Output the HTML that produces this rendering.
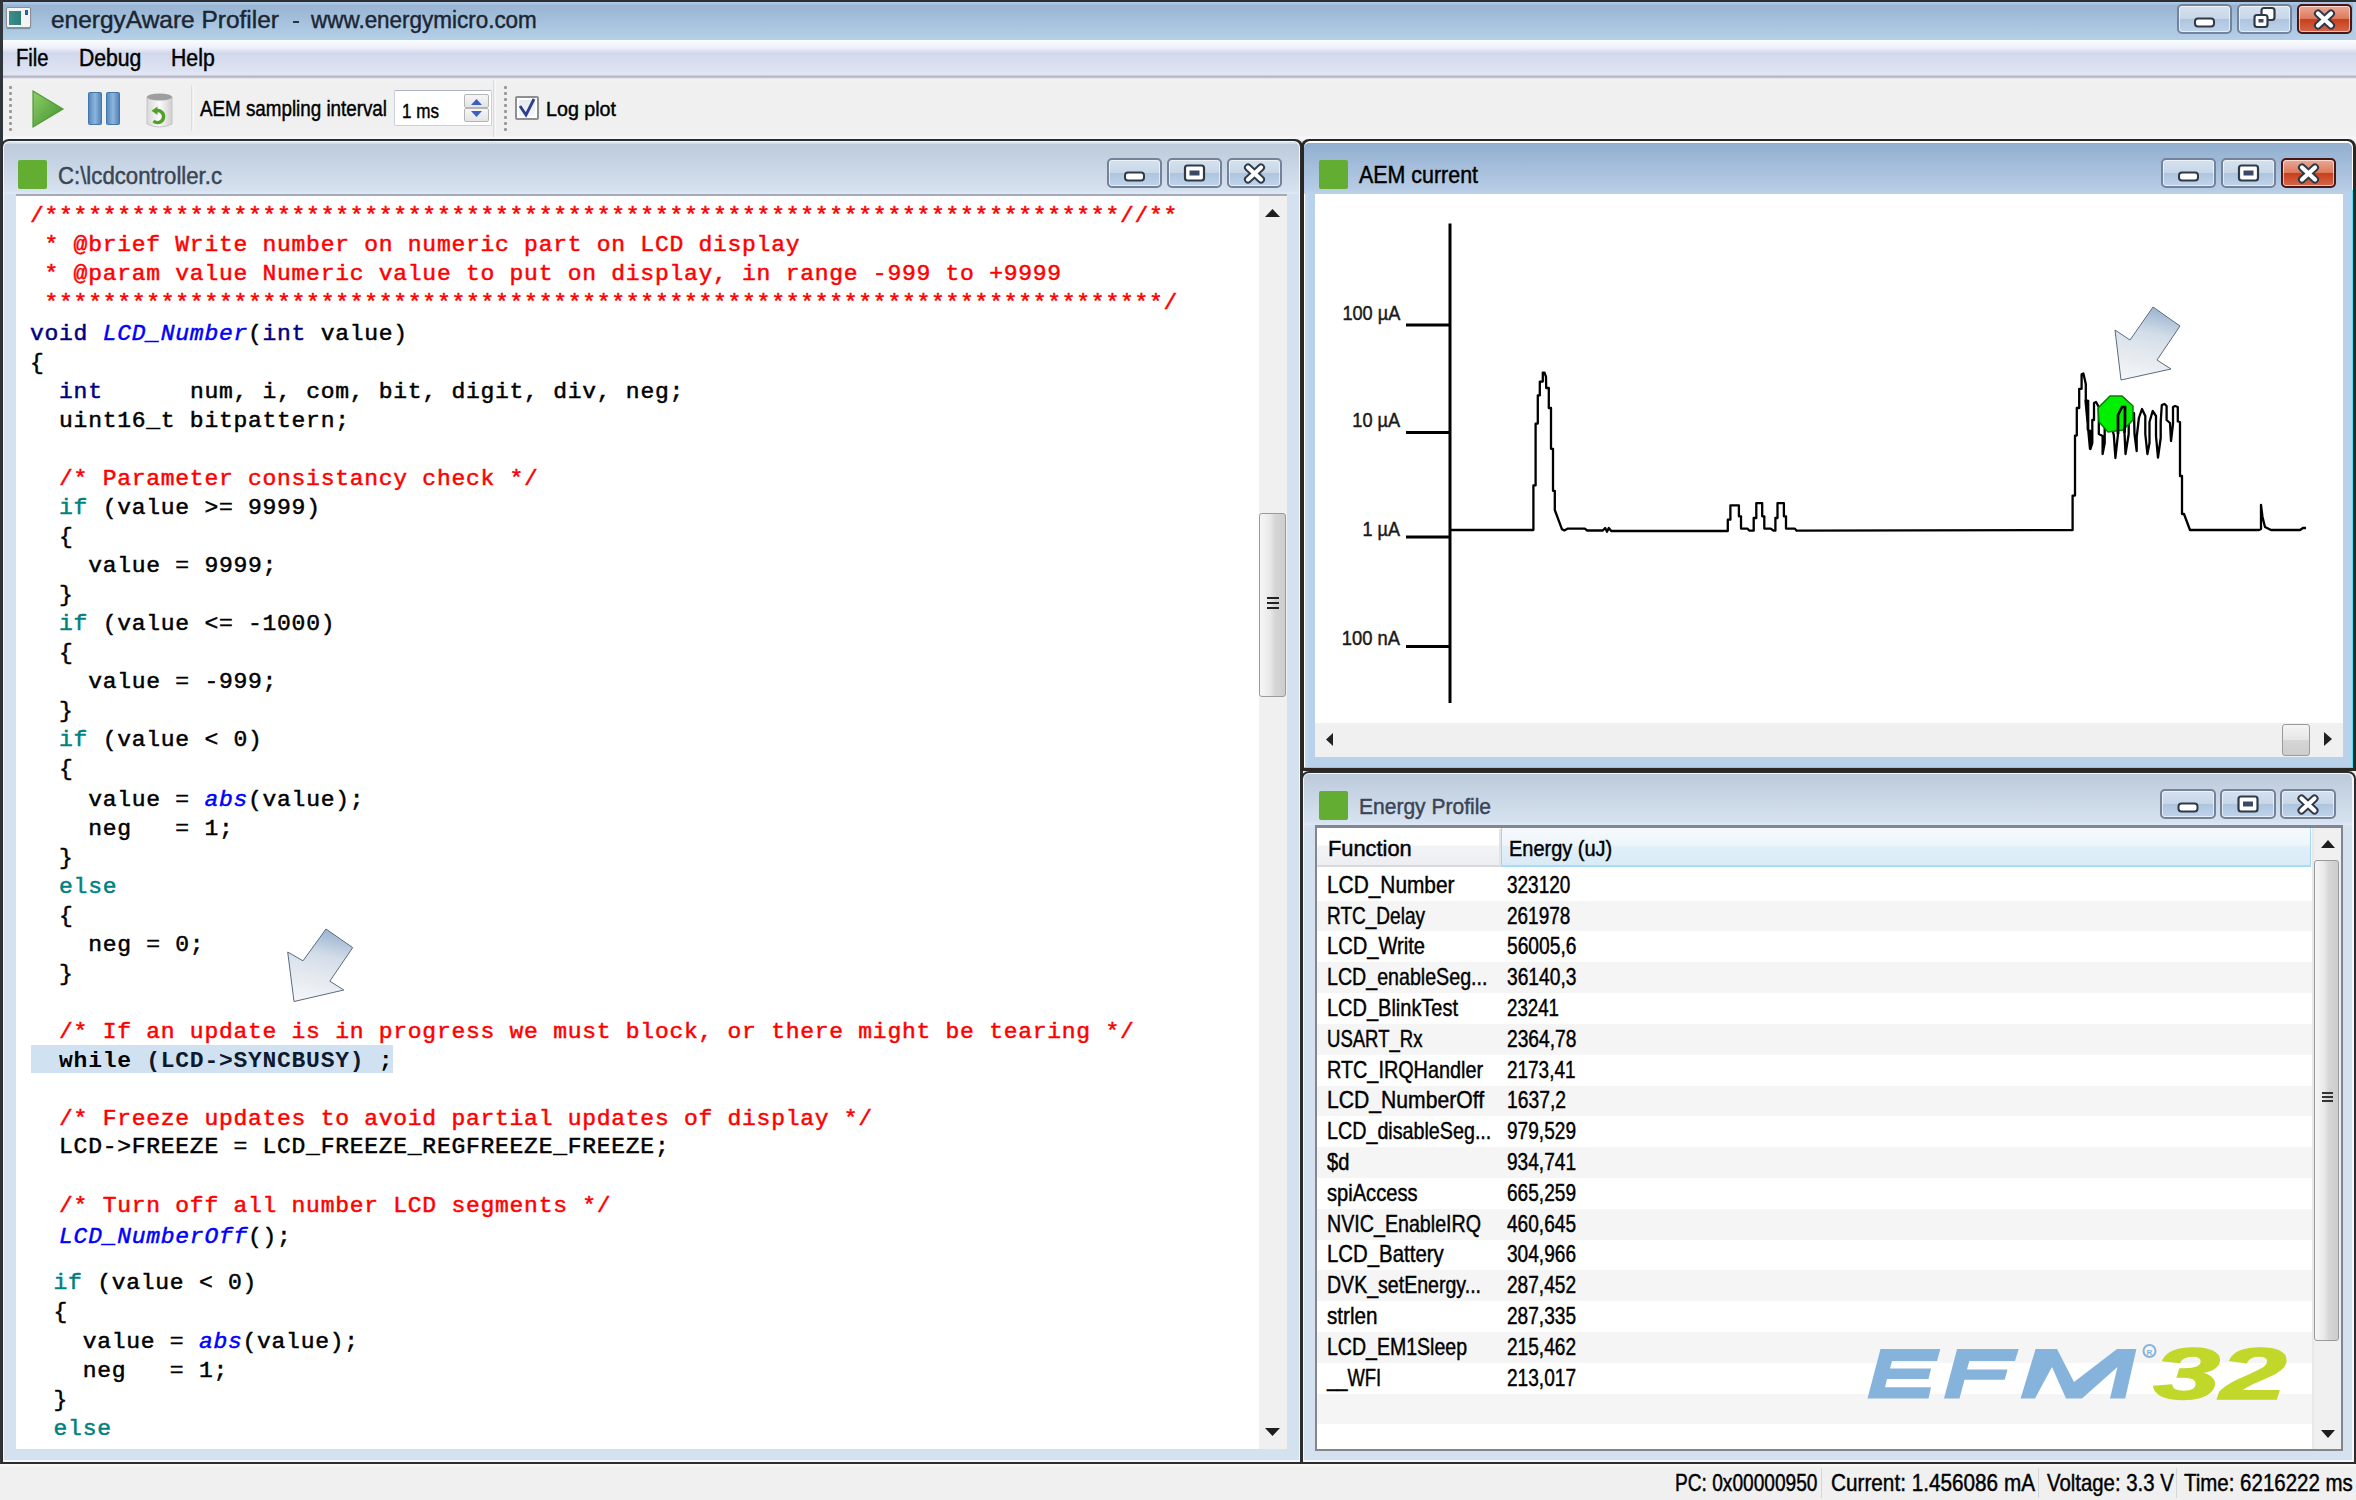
<!DOCTYPE html>
<html><head><meta charset="utf-8">
<style>
*{margin:0;padding:0;box-sizing:border-box}
html,body{width:2356px;height:1500px;overflow:hidden;background:#f0f0f0;font-family:"Liberation Sans",sans-serif;position:relative}
.a{position:absolute}
.t{position:absolute;white-space:pre;line-height:1}
.btn{position:absolute;border:2px solid #75839a;border-radius:5px;box-shadow:inset 0 0 0 1px rgba(255,255,255,.6);background:linear-gradient(#d5e1ee,#c8d7e8 48%,#aec5df 52%,#c0d3ea)}
.btnr{background:linear-gradient(#eba894,#dd7b5e 48%,#c8401c 52%,#d5664a);border-color:#4a1717}
.code{font-family:"Liberation Mono",monospace;font-size:23px;letter-spacing:0.73px;color:#000;-webkit-text-stroke:0.5px;transform:scaleY(0.92)}
.cm{color:#ff0000}.kw{color:#008080}.ty{color:#000080}.fn{color:#0000ff;font-style:italic}
svg{position:absolute;overflow:visible}
</style></head>
<body>

<div class="a" style="left:0px;top:0px;width:2356px;height:40px;background:linear-gradient(#2e2e2e 0,#2e2e2e 2px,#a8c6e6 2px,#a8c6e6 4px,#98b4d2 5px,#b4cfe7 39px,#b4cfe7 40px)"></div>
<div class="a" style="left:0px;top:40px;width:2356px;height:39px;background:linear-gradient(#fafdfd 0,#eef0f8 8px,#d2d8ec 13px,#e0e5f3 34px,#e6e6f8 35px,#b4b6c6 36px,#b4b6c6 37px,#f3f3f3 39px)"></div>
<div class="a" style="left:0px;top:79px;width:2356px;height:60px;background:linear-gradient(#f3f3f3,#f0f0f0 4px,#f0f0f0 56px,#f4f6fa 58px,#f4f6fa 60px)"></div>
<div class="a" style="left:0px;top:0px;width:3px;height:1464px;background:#30353c"></div>
<div class="a" style="left:2353px;top:2px;width:3px;height:38px;background:#b6cde6"></div>
<div class="a" style="left:6px;top:7px;width:25px;height:21px;background:#f4f4f4;border:1px solid #8a8f96;border-radius:2px;box-shadow:0 1px 1px rgba(0,0,0,.3)"></div>
<div class="a" style="left:9px;top:11px;width:12px;height:14px;background:linear-gradient(90deg,#3d8f8a,#2e7f7b)"></div>
<div class="a" style="left:25px;top:10px;width:3px;height:5px;background:#2c5fb0"></div>
<div class="t" style="top:7.7px;font-size:24.6px;color:#1b2633;font-family:'Liberation Sans',sans-serif;-webkit-text-stroke:0.45px #1b2633;left:50.5px;transform:scaleX(0.9943);transform-origin:left top;">energyAware Profiler</div>
<div class="a" style="left:293px;top:21px;width:6px;height:2px;background:#2a3440"></div>
<div class="t" style="top:7.7px;font-size:24.6px;color:#1b2633;font-family:'Liberation Sans',sans-serif;-webkit-text-stroke:0.45px #1b2633;left:310.5px;transform:scaleX(0.9128);transform-origin:left top;">www.energymicro.com</div>
<div class="btn" style="left:2177px;top:4px;width:55px;height:30px"></div>
<div class="btn" style="left:2237px;top:4px;width:55px;height:30px"></div>
<div class="btn btnr" style="left:2297px;top:4px;width:55px;height:30px"></div>
<svg style="left:0;top:0" width="2356" height="1500" viewBox="0 0 2356 1500"><rect x="2195.0" y="18.5" width="19" height="8" rx="3" fill="#fff" stroke="#2f3a48" stroke-width="2"/><rect x="2261.5" y="8.0" width="13" height="12" rx="2.5" fill="#fff" stroke="#2f3a48" stroke-width="2.2"/><rect x="2254.5" y="15.0" width="13" height="12" rx="2.5" fill="#fff" stroke="#2f3a48" stroke-width="2.2"/><rect x="2258.5" y="19.0" width="5" height="3.5" fill="#3a4a66"/><path d="M2318.0 13.5 L2331.0 25.5 M2331.0 13.5 L2318.0 25.5" stroke="#2f3a48" stroke-width="8" stroke-linecap="round"/><path d="M2318.0 13.5 L2331.0 25.5 M2331.0 13.5 L2318.0 25.5" stroke="#fff" stroke-width="4.2" stroke-linecap="round"/></svg>
<div class="t" style="top:46.8px;font-size:23.3px;color:#000;font-family:'Liberation Sans',sans-serif;-webkit-text-stroke:0.45px #000;left:16.3px;transform:scaleX(0.8658);transform-origin:left top;">File</div>
<div class="t" style="top:46.8px;font-size:23.3px;color:#000;font-family:'Liberation Sans',sans-serif;-webkit-text-stroke:0.45px #000;left:78.7px;transform:scaleX(0.9089);transform-origin:left top;">Debug</div>
<div class="t" style="top:46.8px;font-size:23.3px;color:#000;font-family:'Liberation Sans',sans-serif;-webkit-text-stroke:0.45px #000;left:170.8px;transform:scaleX(0.9121);transform-origin:left top;">Help</div>
<div class="a" style="left:9px;top:86px;width:3px;height:3px;background:#9a9a9a;border-radius:1px"></div>
<div class="a" style="left:9px;top:92px;width:3px;height:3px;background:#9a9a9a;border-radius:1px"></div>
<div class="a" style="left:9px;top:98px;width:3px;height:3px;background:#9a9a9a;border-radius:1px"></div>
<div class="a" style="left:9px;top:104px;width:3px;height:3px;background:#9a9a9a;border-radius:1px"></div>
<div class="a" style="left:9px;top:110px;width:3px;height:3px;background:#9a9a9a;border-radius:1px"></div>
<div class="a" style="left:9px;top:116px;width:3px;height:3px;background:#9a9a9a;border-radius:1px"></div>
<div class="a" style="left:9px;top:122px;width:3px;height:3px;background:#9a9a9a;border-radius:1px"></div>
<div class="a" style="left:9px;top:128px;width:3px;height:3px;background:#9a9a9a;border-radius:1px"></div>
<div class="a" style="left:504px;top:86px;width:3px;height:3px;background:#9a9a9a;border-radius:1px"></div>
<div class="a" style="left:504px;top:92px;width:3px;height:3px;background:#9a9a9a;border-radius:1px"></div>
<div class="a" style="left:504px;top:98px;width:3px;height:3px;background:#9a9a9a;border-radius:1px"></div>
<div class="a" style="left:504px;top:104px;width:3px;height:3px;background:#9a9a9a;border-radius:1px"></div>
<div class="a" style="left:504px;top:110px;width:3px;height:3px;background:#9a9a9a;border-radius:1px"></div>
<div class="a" style="left:504px;top:116px;width:3px;height:3px;background:#9a9a9a;border-radius:1px"></div>
<div class="a" style="left:504px;top:122px;width:3px;height:3px;background:#9a9a9a;border-radius:1px"></div>
<div class="a" style="left:504px;top:128px;width:3px;height:3px;background:#9a9a9a;border-radius:1px"></div>
<svg style="left:0;top:0" width="700" height="140" viewBox="0 0 700 140"><defs><linearGradient id="gplay" x1="0" y1="0" x2="1" y2="1"><stop offset="0" stop-color="#8fce6a"/><stop offset="1" stop-color="#3f8f2c"/></linearGradient><linearGradient id="gpause" x1="0" y1="0" x2="1" y2="0"><stop offset="0" stop-color="#4f86bd"/><stop offset=".5" stop-color="#8fb6dc"/><stop offset="1" stop-color="#4a7fb5"/></linearGradient><linearGradient id="gcyl" x1="0" y1="0" x2="1" y2="0"><stop offset="0" stop-color="#d8d8d8"/><stop offset=".5" stop-color="#fbfbfb"/><stop offset="1" stop-color="#cfcfcf"/></linearGradient></defs><path d="M33 91 L63 109 L33 127 Z" fill="url(#gplay)" stroke="#4f9a36" stroke-width="1.2"/><rect x="88.5" y="92.5" width="13" height="32" rx="1" fill="url(#gpause)" stroke="#4577ab"/><rect x="106.5" y="92.5" width="13" height="32" rx="1" fill="url(#gpause)" stroke="#4577ab"/><path d="M147 97 L147 124 Q159.5 130 172 124 L172 97 Z" fill="url(#gcyl)" stroke="#c4c4c4"/><ellipse cx="159.5" cy="97" rx="12.5" ry="3.5" fill="#9e9e9e"/><path d="M153.5 121 A6 6 0 1 0 156 110.8" fill="none" stroke="#52a02a" stroke-width="3.4"/><path d="M157.5 106.5 L157.5 115 L151.5 110.8 Z" fill="#52a02a"/><rect x="191.5" y="85" width="1" height="46" fill="#c9c9c9"/><rect x="192.5" y="85" width="1" height="46" fill="#fff"/><rect x="493.5" y="80" width="1" height="57" fill="#c9c9c9"/><rect x="494.5" y="80" width="1" height="57" fill="#fff"/></svg>
<div class="t" style="top:97.5px;font-size:22.2px;color:#000;font-family:'Liberation Sans',sans-serif;-webkit-text-stroke:0.45px #000;left:199.5px;transform:scaleX(0.8472);transform-origin:left top;">AEM sampling interval</div>
<div class="a" style="left:394px;top:90px;width:98px;height:36px;background:#fff;border:1px solid #c9d1dc;border-top-color:#abb4c0;border-radius:2px"></div>
<div class="t" style="top:99.5px;font-size:21px;color:#000;font-family:'Liberation Sans',sans-serif;-webkit-text-stroke:0.45px #000;left:402.0px;transform:scaleX(0.8131);transform-origin:left top;">1 ms</div>
<div class="a" style="left:464px;top:94px;width:25px;height:14px;background:linear-gradient(#f6f6f6,#e4e4e4);border:1px solid #b5b5b5;border-radius:2px"></div>
<div class="a" style="left:464px;top:108px;width:25px;height:14px;background:linear-gradient(#f6f6f6,#e4e4e4);border:1px solid #b5b5b5;border-radius:2px"></div>
<svg style="left:0;top:0" width="700" height="140" viewBox="0 0 700 140"><path d="M471 105 L476.5 99 L482 105Z" fill="#3b5fbf"/><path d="M471 111 L476.5 117 L482 111Z" fill="#3b5fbf"/></svg>
<div class="a" style="left:515px;top:96px;width:24px;height:24px;background:linear-gradient(#e4e8ee,#f8f8f8);border:2px solid #8e8f8f;border-radius:2px;box-shadow:inset 0 0 0 2px #fff"></div>
<svg style="left:0;top:0" width="700" height="140" viewBox="0 0 700 140"><path d="M520 106 L526 115 L534 99" fill="none" stroke="#2b3f8f" stroke-width="2.8"/></svg>
<div class="t" style="top:98.7px;font-size:20.8px;color:#000;font-family:'Liberation Sans',sans-serif;-webkit-text-stroke:0.45px #000;left:546.0px;transform:scaleX(0.9458);transform-origin:left top;">Log plot</div>
<div class="a" style="left:1px;top:139px;width:1302px;height:1325px;background:#2e2c2a;border-radius:8px 8px 0 0"></div>
<div class="a" style="left:3px;top:141px;width:1297px;height:1321px;background:#f4f8fc;border-radius:6px 6px 0 0"></div>
<div class="a" style="left:4px;top:142px;width:1295px;height:1318px;background:#d4e1ef;border-radius:5px 5px 0 0"></div>
<div class="a" style="left:4px;top:143px;width:1295px;height:51px;background:linear-gradient(#e8f0fa 0,#bccadb 1px,#d6e2ef 48px,#dce8f6 50px);border-radius:5px 5px 0 0"></div>
<div class="a" style="left:16px;top:194px;width:1271px;height:2px;background:#a5aab5"></div>
<div class="a" style="left:16px;top:196px;width:1243px;height:1253px;background:#fff"></div>
<div class="a" style="left:1259px;top:196px;width:28px;height:1253px;background:#f0f0f0"></div>
<div class="a" style="left:18px;top:160px;width:29px;height:29px;background:#63ad33;border-radius:2px"></div>
<div class="t" style="top:164.5px;font-size:23.3px;color:#3b4554;font-family:'Liberation Sans',sans-serif;-webkit-text-stroke:0.45px #3b4554;left:58.0px;transform:scaleX(0.9524);transform-origin:left top;">C:\lcdcontroller.c</div>
<div class="btn" style="left:1107px;top:158px;width:55px;height:30px"></div>
<div class="btn" style="left:1167px;top:158px;width:55px;height:30px"></div>
<div class="btn" style="left:1227px;top:158px;width:55px;height:30px"></div>
<svg style="left:0;top:0" width="2356" height="1500" viewBox="0 0 2356 1500"><rect x="1125.0" y="172.5" width="19" height="8" rx="3" fill="#fff" stroke="#2f3a48" stroke-width="2"/><rect x="1185.0" y="165.5" width="19" height="15" rx="2.5" fill="#fff" stroke="#2f3a48" stroke-width="2.2"/><rect x="1189.5" y="170.5" width="10" height="5" fill="#3a4a66"/><path d="M1248.0 167.5 L1261.0 179.5 M1261.0 167.5 L1248.0 179.5" stroke="#2f3a48" stroke-width="8" stroke-linecap="round"/><path d="M1248.0 167.5 L1261.0 179.5 M1261.0 167.5 L1248.0 179.5" stroke="#fff" stroke-width="4.2" stroke-linecap="round"/></svg>
<div class="a" style="left:31px;top:1045px;width:362px;height:28px;background:#d0e2f2"></div>
<div class="t code" style="left:30px;top:204.9px;transform-origin:0 17.63px"><span class="cm">/**************************************************************************//**</span></div>
<div class="t code" style="left:30px;top:233.9px;transform-origin:0 17.63px"><span class="cm"> * @brief Write number on numeric part on LCD display</span></div>
<div class="t code" style="left:30px;top:262.9px;transform-origin:0 17.63px"><span class="cm"> * @param value Numeric value to put on display, in range -999 to +9999</span></div>
<div class="t code" style="left:30px;top:291.9px;transform-origin:0 17.63px"><span class="cm"> *****************************************************************************/</span></div>
<div class="t code" style="left:30px;top:322.9px;transform-origin:0 17.63px"><span class="ty">void </span><span class="fn">LCD_Number</span>(<span class="ty">int</span> value)</div>
<div class="t code" style="left:30px;top:351.9px;transform-origin:0 17.63px">{</div>
<div class="t code" style="left:30px;top:380.9px;transform-origin:0 17.63px">  <span class="ty">int</span>      num, i, com, bit, digit, div, neg;</div>
<div class="t code" style="left:30px;top:409.9px;transform-origin:0 17.63px">  uint16_t bitpattern;</div>
<div class="t code" style="left:30px;top:467.9px;transform-origin:0 17.63px"><span class="cm">  /* Parameter consistancy check */</span></div>
<div class="t code" style="left:30px;top:496.9px;transform-origin:0 17.63px">  <span class="kw">if</span> (value &gt;= 9999)</div>
<div class="t code" style="left:30px;top:525.9px;transform-origin:0 17.63px">  {</div>
<div class="t code" style="left:30px;top:555.4px;transform-origin:0 17.63px">    value = 9999;</div>
<div class="t code" style="left:30px;top:583.9px;transform-origin:0 17.63px">  }</div>
<div class="t code" style="left:30px;top:612.9px;transform-origin:0 17.63px">  <span class="kw">if</span> (value &lt;= -1000)</div>
<div class="t code" style="left:30px;top:641.9px;transform-origin:0 17.63px">  {</div>
<div class="t code" style="left:30px;top:671.4px;transform-origin:0 17.63px">    value = -999;</div>
<div class="t code" style="left:30px;top:699.9px;transform-origin:0 17.63px">  }</div>
<div class="t code" style="left:30px;top:728.9px;transform-origin:0 17.63px">  <span class="kw">if</span> (value &lt; 0)</div>
<div class="t code" style="left:30px;top:757.9px;transform-origin:0 17.63px">  {</div>
<div class="t code" style="left:30px;top:788.9px;transform-origin:0 17.63px">    value = <span class="fn">abs</span>(value);</div>
<div class="t code" style="left:30px;top:817.9px;transform-origin:0 17.63px">    neg   = 1;</div>
<div class="t code" style="left:30px;top:846.9px;transform-origin:0 17.63px">  }</div>
<div class="t code" style="left:30px;top:875.9px;transform-origin:0 17.63px">  <span class="kw">else</span></div>
<div class="t code" style="left:30px;top:904.9px;transform-origin:0 17.63px">  {</div>
<div class="t code" style="left:30px;top:933.9px;transform-origin:0 17.63px">    neg = 0;</div>
<div class="t code" style="left:30px;top:962.9px;transform-origin:0 17.63px">  }</div>
<div class="t code" style="left:30px;top:1020.9px;transform-origin:0 17.63px"><span class="cm">  /* If an update is in progress we must block, or there might be tearing */</span></div>
<div class="t code" style="left:30px;top:1107.9px;transform-origin:0 17.63px"><span class="cm">  /* Freeze updates to avoid partial updates of display */</span></div>
<div class="t code" style="left:30px;top:1136.4px;transform-origin:0 17.63px">  LCD-&gt;FREEZE = LCD_FREEZE_REGFREEZE_FREEZE;</div>
<div class="t code" style="left:30px;top:1195.4px;transform-origin:0 17.63px"><span class="cm">  /* Turn off all number LCD segments */</span></div>
<div class="t code" style="left:30px;top:1225.9px;transform-origin:0 17.63px">  <span class="fn">LCD_NumberOff</span>();</div>
<div class="t code" style="left:24.5px;top:1271.9px;transform-origin:0 17.63px">  <span class="kw">if</span> (value &lt; 0)</div>
<div class="t code" style="left:24.5px;top:1300.9px;transform-origin:0 17.63px">  {</div>
<div class="t code" style="left:24.5px;top:1331.3px;transform-origin:0 17.63px">    value = <span class="fn">abs</span>(value);</div>
<div class="t code" style="left:24.5px;top:1359.9px;transform-origin:0 17.63px">    neg   = 1;</div>
<div class="t code" style="left:24.5px;top:1388.9px;transform-origin:0 17.63px">  }</div>
<div class="t code" style="left:24.5px;top:1417.7px;transform-origin:0 17.63px">  <span class="kw">else</span></div>
<div class="t code" style="left:30px;top:1049.9px;transform-origin:0 17.63px;font-weight:bold;-webkit-text-stroke:0">  while <span style="color:#0d1a2e">(LCD-&gt;SYNCBUSY)</span> ;</div>
<div class="a" style="left:1301px;top:139px;width:1055px;height:632px;background:#2a2622;border-radius:8px 8px 0 0"></div>
<div class="a" style="left:1304px;top:141px;width:1049px;height:627px;background:#fff;border-radius:6px 6px 0 0"></div>
<div class="a" style="left:1305px;top:143px;width:1047px;height:624px;background:linear-gradient(90deg,#c4d9ee,#b9d1ea 4px);border-radius:5px 5px 0 0"></div>
<div class="a" style="left:1304px;top:143px;width:1048px;height:51px;background:linear-gradient(#91afd0,#b8cde6 48px,#bcd2ea 51px);border-radius:5px 5px 0 0"></div>
<div class="a" style="left:1304px;top:767px;width:1049px;height:1px;background:#3ee8ff"></div>
<div class="a" style="left:2352px;top:190px;width:1px;height:578px;background:#3ee8ff"></div>
<div class="a" style="left:1315px;top:194px;width:1028px;height:529px;background:#fff"></div>
<div class="a" style="left:1315px;top:723px;width:1028px;height:34px;background:#f0f0f0"></div>
<div class="a" style="left:1319px;top:160px;width:29px;height:29px;background:#63ad33;border-radius:2px"></div>
<div class="t" style="top:164.3px;font-size:23.3px;color:#000;font-family:'Liberation Sans',sans-serif;-webkit-text-stroke:0.45px #000;left:1358.6px;transform:scaleX(0.9192);transform-origin:left top;">AEM current</div>
<div class="btn" style="left:2161px;top:158px;width:55px;height:30px"></div>
<div class="btn" style="left:2221px;top:158px;width:55px;height:30px"></div>
<div class="btn btnr" style="left:2281px;top:158px;width:55px;height:30px"></div>
<svg style="left:0;top:0" width="2356" height="1500" viewBox="0 0 2356 1500"><rect x="2179.0" y="172.5" width="19" height="8" rx="3" fill="#fff" stroke="#2f3a48" stroke-width="2"/><rect x="2239.0" y="165.5" width="19" height="15" rx="2.5" fill="#fff" stroke="#2f3a48" stroke-width="2.2"/><rect x="2243.5" y="170.5" width="10" height="5" fill="#3a4a66"/><path d="M2302.0 167.5 L2315.0 179.5 M2315.0 167.5 L2302.0 179.5" stroke="#2f3a48" stroke-width="8" stroke-linecap="round"/><path d="M2302.0 167.5 L2315.0 179.5 M2315.0 167.5 L2302.0 179.5" stroke="#fff" stroke-width="4.2" stroke-linecap="round"/></svg>
<svg style="left:0;top:0" width="2356" height="1500" viewBox="0 0 2356 1500"><path d="M1450 223.5 L1450 703" stroke="#000" stroke-width="3"/><path d="M1406 325 L1450 325 M1406 432.5 L1450 432.5 M1406 537 L1450 537 M1406 646.5 L1450 646.5" stroke="#000" stroke-width="3"/><polyline points="1450.0,530.0 1533.4,530.0 1533.4,485.4 1535.6,485.4 1535.6,423.6 1537.8,423.6 1537.8,395.4 1539.8,395.4 1539.8,381.6 1542.8,381.6 1542.8,372.6 1544.5,372.6 1546.0,376.8 1546.2,388.0 1548.8,388.0 1548.8,408.0 1551.0,408.0 1551.0,448.8 1553.0,448.8 1553.0,490.8 1554.8,490.8 1554.8,510.0 1562.0,529.3 1564.4,530.4 1567.4,528.7 1584.8,528.7 1587.2,530.5 1602.8,530.5 1605.2,528.0 1607.0,531.7 1608.8,528.0 1611.2,531.0 1727.8,531.0 1727.8,519.7 1730.4,519.7 1730.4,505.3 1738.9,505.3 1738.9,516.3 1741.0,516.3 1741.0,528.6 1747.4,528.6 1749.5,530.7 1753.7,530.7 1753.7,518.0 1756.3,518.0 1756.3,503.2 1762.2,503.2 1762.2,516.3 1764.3,516.3 1764.3,528.6 1770.7,528.6 1773.7,530.7 1775.4,530.7 1775.4,518.0 1777.5,518.0 1777.5,503.2 1783.9,503.2 1783.9,516.3 1786.0,516.3 1786.0,528.6 1794.9,528.6 1796.6,530.7 2072.6,530.0 2072.6,495.6 2075.0,495.6 2075.0,435.6 2076.8,435.6 2076.8,408.0 2079.2,408.0 2079.2,388.8 2081.6,388.8 2081.6,374.4 2083.4,373.5 2085.8,384.0 2085.8,400.8 2088.2,400.8 2088.2,430.8 2090.0,430.8 2090.0,448.8 2085.5,400.7 2087.7,400.7 2087.7,429.5 2090.5,431.0 2090.5,449.0 2092.3,443.0 2092.3,420.0 2094.0,420.0 2094.0,403.0 2096.0,402.0 2098.8,407.0 2098.8,434.0 2102.6,436.0 2102.6,454.0 2104.7,443.0 2104.7,425.0 2110.0,420.0 2113.8,435.0 2115.4,458.0 2118.0,434.0 2118.0,415.0 2122.0,407.0 2125.0,407.0 2125.0,420.0 2124.5,432.7 2125.5,454.0 2128.7,434.0 2128.7,424.0 2134.0,413.0 2134.5,434.0 2136.7,451.0 2136.7,437.0 2138.9,418.0 2142.0,409.0 2145.3,416.0 2145.3,434.0 2147.4,454.0 2149.5,443.0 2149.5,422.0 2152.7,411.0 2156.0,416.0 2156.0,436.0 2158.0,457.7 2160.7,438.0 2160.7,422.0 2161.8,405.0 2164.5,404.0 2166.6,406.0 2166.6,420.0 2170.0,423.0 2171.0,441.0 2173.0,424.0 2173.0,407.0 2175.0,406.0 2177.8,407.0 2177.8,421.5 2180.0,422.0 2180.0,476.0 2182.0,476.0 2182.0,514.0 2184.0,514.0 2190.0,530.0 2259.0,530.0 2261.0,529.0 2261.0,505.0 2262.5,517.0 2265.0,527.0 2271.0,530.0 2300.0,530.0 2303.0,528.0 2306.0,528.0" fill="none" stroke="#000" stroke-width="2.3" stroke-linejoin="round"/><polygon points="2110,396 2122,396 2133,406 2133,420 2123,430 2108,432 2099,422 2098,408" fill="#00f000" stroke="#0a7a0a" stroke-width="1.5"/><path d="M2118 434 L2118 415 L2122 407 L2125 407 L2125 420 L2124.5 432.7" fill="none" stroke="#000" stroke-width="2.7"/></svg>
<div class="t" style="top:302.5px;font-size:20.2px;color:#1a1a1a;font-family:'Liberation Sans',sans-serif;-webkit-text-stroke:0.45px #1a1a1a;right:956.0px;transform:scaleX(0.9008);transform-origin:right top;">100 µA</div>
<div class="t" style="top:409.9px;font-size:20.2px;color:#1a1a1a;font-family:'Liberation Sans',sans-serif;-webkit-text-stroke:0.45px #1a1a1a;right:956.0px;transform:scaleX(0.9011);transform-origin:right top;">10 µA</div>
<div class="t" style="top:518.6px;font-size:20.2px;color:#1a1a1a;font-family:'Liberation Sans',sans-serif;-webkit-text-stroke:0.45px #1a1a1a;right:956.0px;transform:scaleX(0.8943);transform-origin:right top;">1 µA</div>
<div class="t" style="top:627.5px;font-size:20.2px;color:#1a1a1a;font-family:'Liberation Sans',sans-serif;-webkit-text-stroke:0.45px #1a1a1a;right:956.0px;transform:scaleX(0.9112);transform-origin:right top;">100 nA</div>
<svg style="left:0;top:0" width="2356" height="1500" viewBox="0 0 2356 1500"><path d="M1333 733 L1326 739.5 L1333 746 Z" fill="#222"/><path d="M2324 732 L2332 739 L2324 746 Z" fill="#222"/></svg>
<div class="a" style="left:2282px;top:724px;width:28px;height:32px;background:linear-gradient(#f4f4f4,#e6e6e6 50%,#d6d6d6 51%,#cdcdcd);border:1px solid #9a9a9a;border-radius:3px"></div>
<div class="a" style="left:1301px;top:771px;width:1055px;height:693px;background:#2e2c2a;border-radius:8px 8px 0 0"></div>
<div class="a" style="left:1303px;top:773px;width:1051px;height:689px;background:#f4f8fc;border-radius:6px 6px 0 0"></div>
<div class="a" style="left:1304px;top:774px;width:1048px;height:686px;background:#d4e1ef;border-radius:5px 5px 0 0"></div>
<div class="a" style="left:1304px;top:774px;width:1048px;height:51px;background:linear-gradient(#bccadb,#d6e2ef 48px,#dce8f6 51px);border-radius:5px 5px 0 0"></div>
<div class="a" style="left:1315px;top:825px;width:1028px;height:626px;background:#82868e"></div>
<div class="a" style="left:1317px;top:828px;width:1024px;height:621px;background:#fff"></div>
<div class="a" style="left:1319px;top:791px;width:29px;height:29px;background:#63ad33;border-radius:2px"></div>
<div class="t" style="top:796.3px;font-size:22.1px;color:#3b4554;font-family:'Liberation Sans',sans-serif;-webkit-text-stroke:0.45px #3b4554;left:1359.2px;transform:scaleX(0.9512);transform-origin:left top;">Energy Profile</div>
<div class="btn" style="left:2160px;top:789px;width:56px;height:30px"></div>
<div class="btn" style="left:2220px;top:789px;width:56px;height:30px"></div>
<div class="btn" style="left:2280px;top:789px;width:56px;height:30px"></div>
<svg style="left:0;top:0" width="2356" height="1500" viewBox="0 0 2356 1500"><rect x="2178.5" y="803.5" width="19" height="8" rx="3" fill="#fff" stroke="#2f3a48" stroke-width="2"/><rect x="2238.5" y="796.5" width="19" height="15" rx="2.5" fill="#fff" stroke="#2f3a48" stroke-width="2.2"/><rect x="2243.0" y="801.5" width="10" height="5" fill="#3a4a66"/><path d="M2301.5 798.5 L2314.5 810.5 M2314.5 798.5 L2301.5 810.5" stroke="#2f3a48" stroke-width="8" stroke-linecap="round"/><path d="M2301.5 798.5 L2314.5 810.5 M2314.5 798.5 L2301.5 810.5" stroke="#fff" stroke-width="4.2" stroke-linecap="round"/></svg>
<div class="a" style="left:1317px;top:900.6px;width:995px;height:30.8px;background:#f5f5f5"></div>
<div class="a" style="left:1317px;top:962.3px;width:995px;height:30.8px;background:#f5f5f5"></div>
<div class="a" style="left:1317px;top:1023.9px;width:995px;height:30.8px;background:#f5f5f5"></div>
<div class="a" style="left:1317px;top:1085.5px;width:995px;height:30.8px;background:#f5f5f5"></div>
<div class="a" style="left:1317px;top:1147.1px;width:995px;height:30.8px;background:#f5f5f5"></div>
<div class="a" style="left:1317px;top:1208.8px;width:995px;height:30.8px;background:#f5f5f5"></div>
<div class="a" style="left:1317px;top:1270.4px;width:995px;height:30.8px;background:#f5f5f5"></div>
<div class="a" style="left:1317px;top:1332.0px;width:995px;height:30.8px;background:#f5f5f5"></div>
<div class="a" style="left:1317px;top:1393.6px;width:995px;height:30.8px;background:#f5f5f5"></div>
<div class="a" style="left:1317px;top:828px;width:184px;height:39px;background:linear-gradient(#ffffff 0,#ffffff 45%,#f3f4f6 50%,#eceef1 100%);border-bottom:2px solid #d8d9dc"></div>
<div class="a" style="left:1499px;top:829px;width:2px;height:37px;background:#e3e4e6"></div>
<div class="a" style="left:1501px;top:828px;width:810px;height:39px;background:linear-gradient(#f4f9fc 0,#eef6fb 45%,#e1eff8 50%,#d9ebf6 100%);border-left:1px solid #9fd8f5;border-bottom:2px solid #a6dcf6;border-right:1px solid #9fd8f5"></div>
<div class="t" style="top:837.5px;font-size:22.1px;color:#000;font-family:'Liberation Sans',sans-serif;-webkit-text-stroke:0.45px #000;left:1328.0px;transform:scaleX(0.9877);transform-origin:left top;">Function</div>
<div class="t" style="top:837.5px;font-size:22.1px;color:#000;font-family:'Liberation Sans',sans-serif;-webkit-text-stroke:0.45px #000;left:1509.3px;transform:scaleX(0.9038);transform-origin:left top;">Energy (uJ)</div>
<div class="t" style="top:872.7px;font-size:24px;color:#000;font-family:'Liberation Sans',sans-serif;-webkit-text-stroke:0.45px #000;left:1326.7px;transform:scaleX(0.8690);transform-origin:left top;">LCD_Number</div>
<div class="t" style="top:872.7px;font-size:24px;color:#000;font-family:'Liberation Sans',sans-serif;-webkit-text-stroke:0.45px #000;left:1507.0px;transform:scaleX(0.7904);transform-origin:left top;">323120</div>
<div class="t" style="top:903.5px;font-size:24px;color:#000;font-family:'Liberation Sans',sans-serif;-webkit-text-stroke:0.45px #000;left:1326.7px;transform:scaleX(0.7929);transform-origin:left top;">RTC_Delay</div>
<div class="t" style="top:903.5px;font-size:24px;color:#000;font-family:'Liberation Sans',sans-serif;-webkit-text-stroke:0.45px #000;left:1507.0px;transform:scaleX(0.7904);transform-origin:left top;">261978</div>
<div class="t" style="top:934.3px;font-size:24px;color:#000;font-family:'Liberation Sans',sans-serif;-webkit-text-stroke:0.45px #000;left:1326.7px;transform:scaleX(0.8382);transform-origin:left top;">LCD_Write</div>
<div class="t" style="top:934.3px;font-size:24px;color:#000;font-family:'Liberation Sans',sans-serif;-webkit-text-stroke:0.45px #000;left:1507.0px;transform:scaleX(0.8000);transform-origin:left top;">56005,6</div>
<div class="t" style="top:965.1px;font-size:24px;color:#000;font-family:'Liberation Sans',sans-serif;-webkit-text-stroke:0.45px #000;left:1326.7px;transform:scaleX(0.8178);transform-origin:left top;">LCD_enableSeg...</div>
<div class="t" style="top:965.1px;font-size:24px;color:#000;font-family:'Liberation Sans',sans-serif;-webkit-text-stroke:0.45px #000;left:1507.0px;transform:scaleX(0.8000);transform-origin:left top;">36140,3</div>
<div class="t" style="top:995.9px;font-size:24px;color:#000;font-family:'Liberation Sans',sans-serif;-webkit-text-stroke:0.45px #000;left:1326.7px;transform:scaleX(0.8323);transform-origin:left top;">LCD_BlinkTest</div>
<div class="t" style="top:995.9px;font-size:24px;color:#000;font-family:'Liberation Sans',sans-serif;-webkit-text-stroke:0.45px #000;left:1507.0px;transform:scaleX(0.7792);transform-origin:left top;">23241</div>
<div class="t" style="top:1026.7px;font-size:24px;color:#000;font-family:'Liberation Sans',sans-serif;-webkit-text-stroke:0.45px #000;left:1326.7px;transform:scaleX(0.7719);transform-origin:left top;">USART_Rx</div>
<div class="t" style="top:1026.7px;font-size:24px;color:#000;font-family:'Liberation Sans',sans-serif;-webkit-text-stroke:0.45px #000;left:1507.0px;transform:scaleX(0.8000);transform-origin:left top;">2364,78</div>
<div class="t" style="top:1057.5px;font-size:24px;color:#000;font-family:'Liberation Sans',sans-serif;-webkit-text-stroke:0.45px #000;left:1326.7px;transform:scaleX(0.8256);transform-origin:left top;">RTC_IRQHandler</div>
<div class="t" style="top:1057.5px;font-size:24px;color:#000;font-family:'Liberation Sans',sans-serif;-webkit-text-stroke:0.45px #000;left:1507.0px;transform:scaleX(0.7896);transform-origin:left top;">2173,41</div>
<div class="t" style="top:1088.4px;font-size:24px;color:#000;font-family:'Liberation Sans',sans-serif;-webkit-text-stroke:0.45px #000;left:1326.7px;transform:scaleX(0.8806);transform-origin:left top;">LCD_NumberOff</div>
<div class="t" style="top:1088.4px;font-size:24px;color:#000;font-family:'Liberation Sans',sans-serif;-webkit-text-stroke:0.45px #000;left:1507.0px;transform:scaleX(0.8037);transform-origin:left top;">1637,2</div>
<div class="t" style="top:1119.2px;font-size:24px;color:#000;font-family:'Liberation Sans',sans-serif;-webkit-text-stroke:0.45px #000;left:1326.7px;transform:scaleX(0.8210);transform-origin:left top;">LCD_disableSeg...</div>
<div class="t" style="top:1119.2px;font-size:24px;color:#000;font-family:'Liberation Sans',sans-serif;-webkit-text-stroke:0.45px #000;left:1507.0px;transform:scaleX(0.7954);transform-origin:left top;">979,529</div>
<div class="t" style="top:1150.0px;font-size:24px;color:#000;font-family:'Liberation Sans',sans-serif;-webkit-text-stroke:0.45px #000;left:1326.7px;transform:scaleX(0.8391);transform-origin:left top;">$d</div>
<div class="t" style="top:1150.0px;font-size:24px;color:#000;font-family:'Liberation Sans',sans-serif;-webkit-text-stroke:0.45px #000;left:1507.0px;transform:scaleX(0.7954);transform-origin:left top;">934,741</div>
<div class="t" style="top:1180.8px;font-size:24px;color:#000;font-family:'Liberation Sans',sans-serif;-webkit-text-stroke:0.45px #000;left:1326.7px;transform:scaleX(0.8377);transform-origin:left top;">spiAccess</div>
<div class="t" style="top:1180.8px;font-size:24px;color:#000;font-family:'Liberation Sans',sans-serif;-webkit-text-stroke:0.45px #000;left:1507.0px;transform:scaleX(0.7954);transform-origin:left top;">665,259</div>
<div class="t" style="top:1211.6px;font-size:24px;color:#000;font-family:'Liberation Sans',sans-serif;-webkit-text-stroke:0.45px #000;left:1326.7px;transform:scaleX(0.8188);transform-origin:left top;">NVIC_EnableIRQ</div>
<div class="t" style="top:1211.6px;font-size:24px;color:#000;font-family:'Liberation Sans',sans-serif;-webkit-text-stroke:0.45px #000;left:1507.0px;transform:scaleX(0.7954);transform-origin:left top;">460,645</div>
<div class="t" style="top:1242.4px;font-size:24px;color:#000;font-family:'Liberation Sans',sans-serif;-webkit-text-stroke:0.45px #000;left:1326.7px;transform:scaleX(0.8494);transform-origin:left top;">LCD_Battery</div>
<div class="t" style="top:1242.4px;font-size:24px;color:#000;font-family:'Liberation Sans',sans-serif;-webkit-text-stroke:0.45px #000;left:1507.0px;transform:scaleX(0.7954);transform-origin:left top;">304,966</div>
<div class="t" style="top:1273.2px;font-size:24px;color:#000;font-family:'Liberation Sans',sans-serif;-webkit-text-stroke:0.45px #000;left:1326.7px;transform:scaleX(0.8149);transform-origin:left top;">DVK_setEnergy...</div>
<div class="t" style="top:1273.2px;font-size:24px;color:#000;font-family:'Liberation Sans',sans-serif;-webkit-text-stroke:0.45px #000;left:1507.0px;transform:scaleX(0.7954);transform-origin:left top;">287,452</div>
<div class="t" style="top:1304.0px;font-size:24px;color:#000;font-family:'Liberation Sans',sans-serif;-webkit-text-stroke:0.45px #000;left:1326.7px;transform:scaleX(0.8605);transform-origin:left top;">strlen</div>
<div class="t" style="top:1304.0px;font-size:24px;color:#000;font-family:'Liberation Sans',sans-serif;-webkit-text-stroke:0.45px #000;left:1507.0px;transform:scaleX(0.7954);transform-origin:left top;">287,335</div>
<div class="t" style="top:1334.8px;font-size:24px;color:#000;font-family:'Liberation Sans',sans-serif;-webkit-text-stroke:0.45px #000;left:1326.7px;transform:scaleX(0.8135);transform-origin:left top;">LCD_EM1Sleep</div>
<div class="t" style="top:1334.8px;font-size:24px;color:#000;font-family:'Liberation Sans',sans-serif;-webkit-text-stroke:0.45px #000;left:1507.0px;transform:scaleX(0.7954);transform-origin:left top;">215,462</div>
<div class="t" style="top:1365.6px;font-size:24px;color:#000;font-family:'Liberation Sans',sans-serif;-webkit-text-stroke:0.45px #000;left:1326.7px;transform:scaleX(0.7669);transform-origin:left top;">__WFI</div>
<div class="t" style="top:1365.6px;font-size:24px;color:#000;font-family:'Liberation Sans',sans-serif;-webkit-text-stroke:0.45px #000;left:1507.0px;transform:scaleX(0.7954);transform-origin:left top;">213,017</div>
<div class="a" style="left:2312px;top:828px;width:29px;height:621px;background:linear-gradient(90deg,#e6e6e6,#f0f0f0 3px)"></div>
<div class="a" style="left:2314px;top:860px;width:25px;height:481px;background:linear-gradient(90deg,#f6f6f6,#e9e9e9 40%,#d6d6d6 60%,#cdcdcd);border:1px solid #9a9a9a;border-radius:3px"></div>
<svg style="left:0;top:0" width="2356" height="1500" viewBox="0 0 2356 1500"><path d="M2321 848 L2328 840 L2335 848 Z" fill="#1e1e1e"/><path d="M2321 1430 L2335 1430 L2328 1438 Z" fill="#1e1e1e"/><path d="M2322 1093 H2333 M2322 1097 H2333 M2322 1101 H2333" stroke="#333" stroke-width="1.8"/><path d="M1265 217 L1272.5 209 L1280 217 Z" fill="#1e1e1e"/><path d="M1265 1428 L1280 1428 L1272.5 1436 Z" fill="#1e1e1e"/></svg>
<div class="a" style="left:1259px;top:513px;width:27px;height:184px;background:linear-gradient(90deg,#f6f6f6,#e9e9e9 40%,#d6d6d6 60%,#cdcdcd);border:1px solid #9a9a9a;border-radius:3px"></div>
<svg style="left:0;top:0" width="2356" height="1500" viewBox="0 0 2356 1500"><path d="M1267 598 H1279 M1267 603 H1279 M1267 608 H1279" stroke="#222" stroke-width="2"/></svg>
<svg style="left:0;top:0" width="2356" height="1500" viewBox="0 0 2356 1500"><path d="M1880.5 1349 L1940.3 1349 L1937 1361 L1892 1361 L1890 1368.6 L1931 1368.6 L1928.5 1379 L1887 1379 L1885 1387.3 L1931 1387.3 L1928.5 1398.5 L1867.5 1398.5 Z" fill="#86b3dc"/><path d="M1957.1 1349 L2018.7 1349 L2015 1361 L1969.3 1361 L1967 1369.5 L2007.5 1369.5 L2004.7 1379.8 L1964.5 1379.8 L1959.5 1398.5 L1944 1398.5 Z" fill="#86b3dc"/><path d="M2020.6 1398.5 L2035.6 1349 L2057 1349 L2074 1382 L2117 1349 L2136.4 1349 L2125.2 1398.5 L2110 1398.5 L2117.5 1367 L2082 1398.5 L2066 1398.5 L2052 1367 L2035 1398.5 Z" fill="#86b3dc"/><circle cx="2149.5" cy="1351" r="6" fill="none" stroke="#86b3dc" stroke-width="2"/><text x="2149.5" y="1354.5" font-family="Liberation Sans" font-size="8" font-weight="bold" fill="#86b3dc" text-anchor="middle">R</text><text x="0" y="0" transform="translate(2153.5 1398.5) scale(1.64 1)" font-family="Liberation Sans" font-size="73" font-weight="bold" font-style="italic" fill="#c1d82b" stroke="#c1d82b" stroke-width="1.6">32</text></svg>
<div class="a" style="left:0px;top:1464px;width:2356px;height:36px;background:linear-gradient(#f8f8f8,#f0f0f0 4px)"></div>
<div class="t" style="top:1471.3px;font-size:23.8px;color:#000;font-family:'Liberation Sans',sans-serif;-webkit-text-stroke:0.45px #000;left:1675.3px;transform:scaleX(0.8038);transform-origin:left top;">PC: 0x00000950</div>
<div class="a" style="left:1821px;top:1468px;width:1px;height:30px;background:#d6d6d6"></div>
<div class="t" style="top:1471.3px;font-size:23.8px;color:#000;font-family:'Liberation Sans',sans-serif;-webkit-text-stroke:0.45px #000;left:1831.0px;transform:scaleX(0.8713);transform-origin:left top;">Current: 1.456086 mA</div>
<div class="a" style="left:2038px;top:1468px;width:1px;height:30px;background:#d6d6d6"></div>
<div class="t" style="top:1471.3px;font-size:23.8px;color:#000;font-family:'Liberation Sans',sans-serif;-webkit-text-stroke:0.45px #000;left:2046.7px;transform:scaleX(0.8557);transform-origin:left top;">Voltage: 3.3 V</div>
<div class="a" style="left:2176px;top:1468px;width:1px;height:30px;background:#d6d6d6"></div>
<div class="t" style="top:1471.3px;font-size:23.8px;color:#000;font-family:'Liberation Sans',sans-serif;-webkit-text-stroke:0.45px #000;left:2184.0px;transform:scaleX(0.8604);transform-origin:left top;">Time: 6216222 ms</div>
<svg style="left:0;top:0" width="2356" height="1500" viewBox="0 0 2356 1500"><defs><linearGradient id="garr" x1=".3" y1="0" x2=".1" y2="1"><stop offset="0" stop-color="#a3bad5"/><stop offset=".3" stop-color="#d3dde8"/><stop offset=".6" stop-color="#e4e9ef"/><stop offset="1" stop-color="#f5f6f9"/></linearGradient></defs><polygon points="294,1001.5 287.7,952 303,960.8 326,929 352.7,947.6 329.8,981.2 343.8,990" fill="url(#garr)" stroke="#5a6c80" stroke-width="1"/><polygon points="2121,380 2115,330 2130,340 2153,307 2180,326 2157,360 2171,369" fill="url(#garr)" stroke="#5a6c80" stroke-width="1"/></svg>
</body></html>
